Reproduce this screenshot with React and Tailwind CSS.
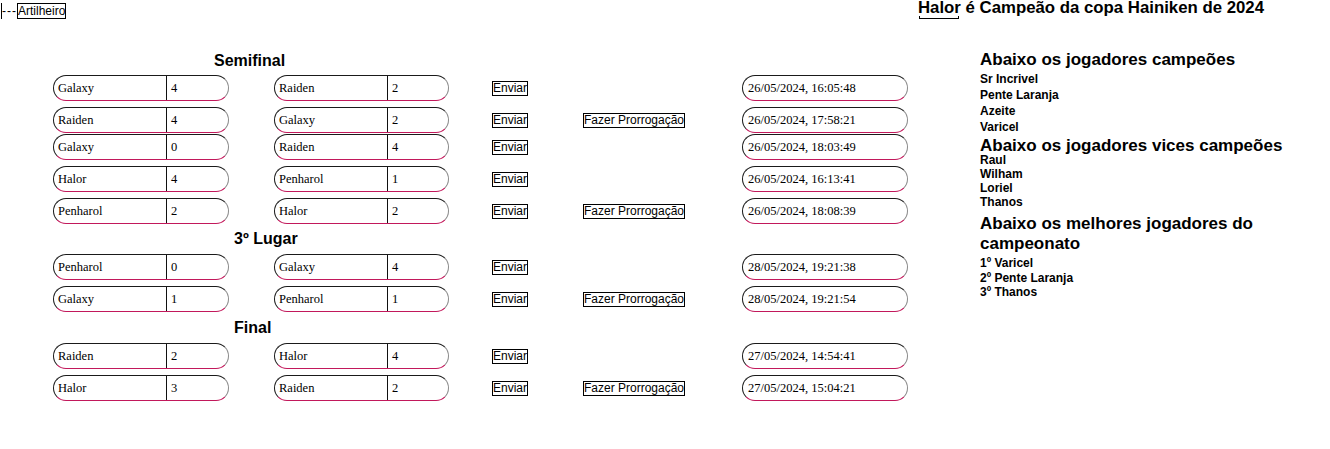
const semi = [
  { a: "Galaxy", sa: 4, b: "Raiden", sb: 2, p: false, d: "26/05/2024, 16:05:48", mt: "mt-[5px]" },
  { a: "Raiden", sa: 4, b: "Galaxy", sb: 2, p: true, d: "26/05/2024, 17:58:21", mt: "mt-[6px]" },
  { a: "Galaxy", sa: 0, b: "Raiden", sb: 4, p: false, d: "26/05/2024, 18:03:49", mt: "mt-[1px]" },
  { a: "Halor", sa: 4, b: "Penharol", sb: 1, p: false, d: "26/05/2024, 16:13:41", mt: "mt-[6px]" },
  { a: "Penharol", sa: 2, b: "Halor", sb: 2, p: true, d: "26/05/2024, 18:08:39", mt: "mt-[6px]" },
];

const terceiro = [
  { a: "Penharol", sa: 0, b: "Galaxy", sb: 4, p: false, d: "28/05/2024, 19:21:38", mt: "mt-[6px]" },
  { a: "Galaxy", sa: 1, b: "Penharol", sb: 1, p: true, d: "28/05/2024, 19:21:54", mt: "mt-[6px]" },
];

const final = [
  { a: "Raiden", sa: 2, b: "Halor", sb: 4, p: false, d: "27/05/2024, 14:54:41", mt: "mt-[6px]" },
  { a: "Halor", sa: 3, b: "Raiden", sb: 2, p: true, d: "27/05/2024, 15:04:21", mt: "mt-[6px]" },
];

const pill =
  "flex h-[26px] rounded-full border border-t-[#1a1a1a] border-l-[#1a1a1a] border-b-[#c2185b] border-r-[#8a8a8a] overflow-hidden";

function Team({ name, score, w }) {
  return (
    <div className={`${pill} ${w}`}>
      <div className="w-[112px] shrink-0 pl-[4px] flex items-center">{name}</div>
      <div className="flex-1 border-l border-[#111] pl-[4px] flex items-center">{score}</div>
    </div>
  );
}

function Match({ m }) {
  return (
    <div className={`flex items-center ${m.mt}`}>
      <Team name={m.a} score={m.sa} w="w-[176px]" />
      <div className="w-[45px]" />
      <Team name={m.b} score={m.sb} w="w-[175px]" />
      <div className="w-[43px]" />
      <div className="w-[91px]">
        <button className="border border-black px-0 h-[15px] leading-[13px] font-['Liberation_Sans',sans-serif] text-[12px]">
          Enviar
        </button>
      </div>
      <div className="w-[159px]">
        {m.p ? (
          <button className="border border-black px-0 h-[15px] leading-[13px] font-['Liberation_Sans',sans-serif] text-[12px]">
            Fazer Prorrogação
          </button>
        ) : null}
      </div>
      <div className={`${pill} w-[166px] pl-[5px] items-center`}>{m.d}</div>
    </div>
  );
}

function Section({ title, ml, mt, rows }) {
  return (
    <div>
      <div className={`${ml} ${mt} font-['Liberation_Sans',sans-serif] font-bold text-[16px] leading-[18px]`}>
        {title}
      </div>
      {rows.map((m, i) => (
        <Match key={i} m={m} />
      ))}
    </div>
  );
}

export default function App() {
  return (
    <div className="flex w-[1330px] h-[449px] bg-white text-black font-['Liberation_Serif',serif] text-[12.5px] overflow-hidden">
      <div className="w-[918px] shrink-0">
        <div className="flex items-center h-[16px] mt-[3px] font-['Liberation_Sans',sans-serif] text-[12px]">
          <span className="w-[2px] h-[16px] border-r border-black" />
          <span className="leading-[14px] tracking-[1px]">---</span>
          <button className="border border-black px-0 h-[16px] leading-[14px]">Artilheiro</button>
        </div>
        <div className="pl-[53px]">
          <Section title="Semifinal" ml="ml-[161px]" mt="mt-[33px]" rows={semi} />
          <Section title="3º Lugar" ml="ml-[181px]" mt="mt-[6px]" rows={terceiro} />
          <Section title="Final" ml="ml-[181px]" mt="mt-[7px]" rows={final} />
        </div>
      </div>
      <div className="flex-1 font-['Liberation_Sans',sans-serif]">
        <div className="font-bold text-[16.8px] leading-[15px] whitespace-nowrap">
          Halor é Campeão da copa Hainiken de 2024
        </div>
        <div className="w-[40px] h-[3px] mt-[1px] ml-[1px] border-x border-b border-black" />
        <div className="pl-[62px] mt-[31px]">
          <div className="font-bold text-[17px] leading-[20px]">Abaixo os jogadores campeões</div>
          <div className="font-bold text-[12px] leading-[16px] mt-[1px]">
            <div>Sr Incrivel</div>
            <div>Pente Laranja</div>
            <div>Azeite</div>
            <div>Varicel</div>
          </div>
          <div className="font-bold text-[17px] leading-[20px] mt-[1px]">Abaixo os jogadores vices campeões</div>
          <div className="font-bold text-[12px] leading-[14px] -mt-[3px]">
            <div>Raul</div>
            <div>Wilham</div>
            <div>Loriel</div>
            <div>Thanos</div>
          </div>
          <div className="font-bold text-[17px] leading-[20px] mt-[5px]">
            Abaixo os melhores jogadores do
            <br />
            campeonato
          </div>
          <div className="font-bold text-[12px] leading-[14.5px] mt-[2px]">
            <div>1º Varicel</div>
            <div>2º Pente Laranja</div>
            <div>3º Thanos</div>
          </div>
        </div>
      </div>
    </div>
  );
}
